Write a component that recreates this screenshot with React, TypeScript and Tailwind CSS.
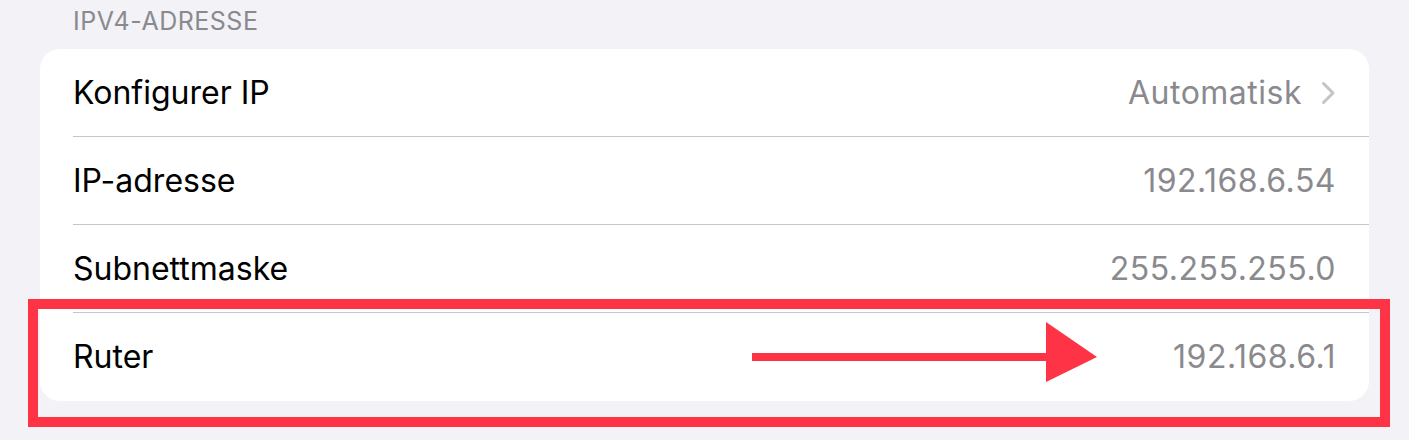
const rows = [
  { label: "Konfigurer IP", value: "Automatisk", chevron: true },
  { label: "IP-adresse", value: "192.168.6.54" },
  { label: "Subnettmaske", value: "255.255.255.0" },
  { label: "Ruter", value: "192.168.6.1" },
];

const Chevron = () => (
  <svg width="15" height="24" viewBox="0 0 15 24" fill="none" className="ml-[19px]">
    <path d="M2.5 2.5 L12 12 L2.5 21.5" stroke="#c4c4c7" strokeWidth="3" strokeLinecap="round" strokeLinejoin="round" />
  </svg>
);

export default function App() {
  return (
    <div
      className="relative h-[440px] w-full overflow-hidden bg-[#f2f2f7] px-[40px]"
      style={{ fontFamily: "Inter, 'Noto Sans', sans-serif" }}
    >
      <div className="flex h-[49px] items-start pl-[33px] pt-[3px] text-[25px] tracking-[0.5px] text-[#8a8a8e]">
        IPV4-ADRESSE
      </div>

      <div className="rounded-[20px] bg-white">
        {rows.map((row, i) => (
          <div key={row.label} className="flex h-[88px] pl-[33px]">
            <div
              className={
                "flex flex-1 items-center justify-between pr-[33px] " +
                (i < rows.length - 1 ? "border-b border-[#c6c6c8]" : "")
              }
            >
              <span className="text-[32px] text-black">{row.label}</span>
              <span className="flex items-center text-[32px] tracking-[0.5px] text-[#8a8a8e]">
                {row.value}
                {row.chevron && <Chevron />}
              </span>
            </div>
          </div>
        ))}
      </div>

      {/* annotation box */}
      <div className="absolute left-[28px] top-[299px] h-[128px] w-[1362px] border-[10px] border-[#fe3346]" />

      {/* annotation arrow */}
      <svg className="absolute left-[750px] top-[320px]" width="350" height="64" viewBox="0 0 350 64">
        <rect x="2" y="33" width="296" height="8" fill="#fe3346" />
        <polygon points="296,2 347,37 296,62" fill="#fe3346" />
      </svg>
    </div>
  );
}
